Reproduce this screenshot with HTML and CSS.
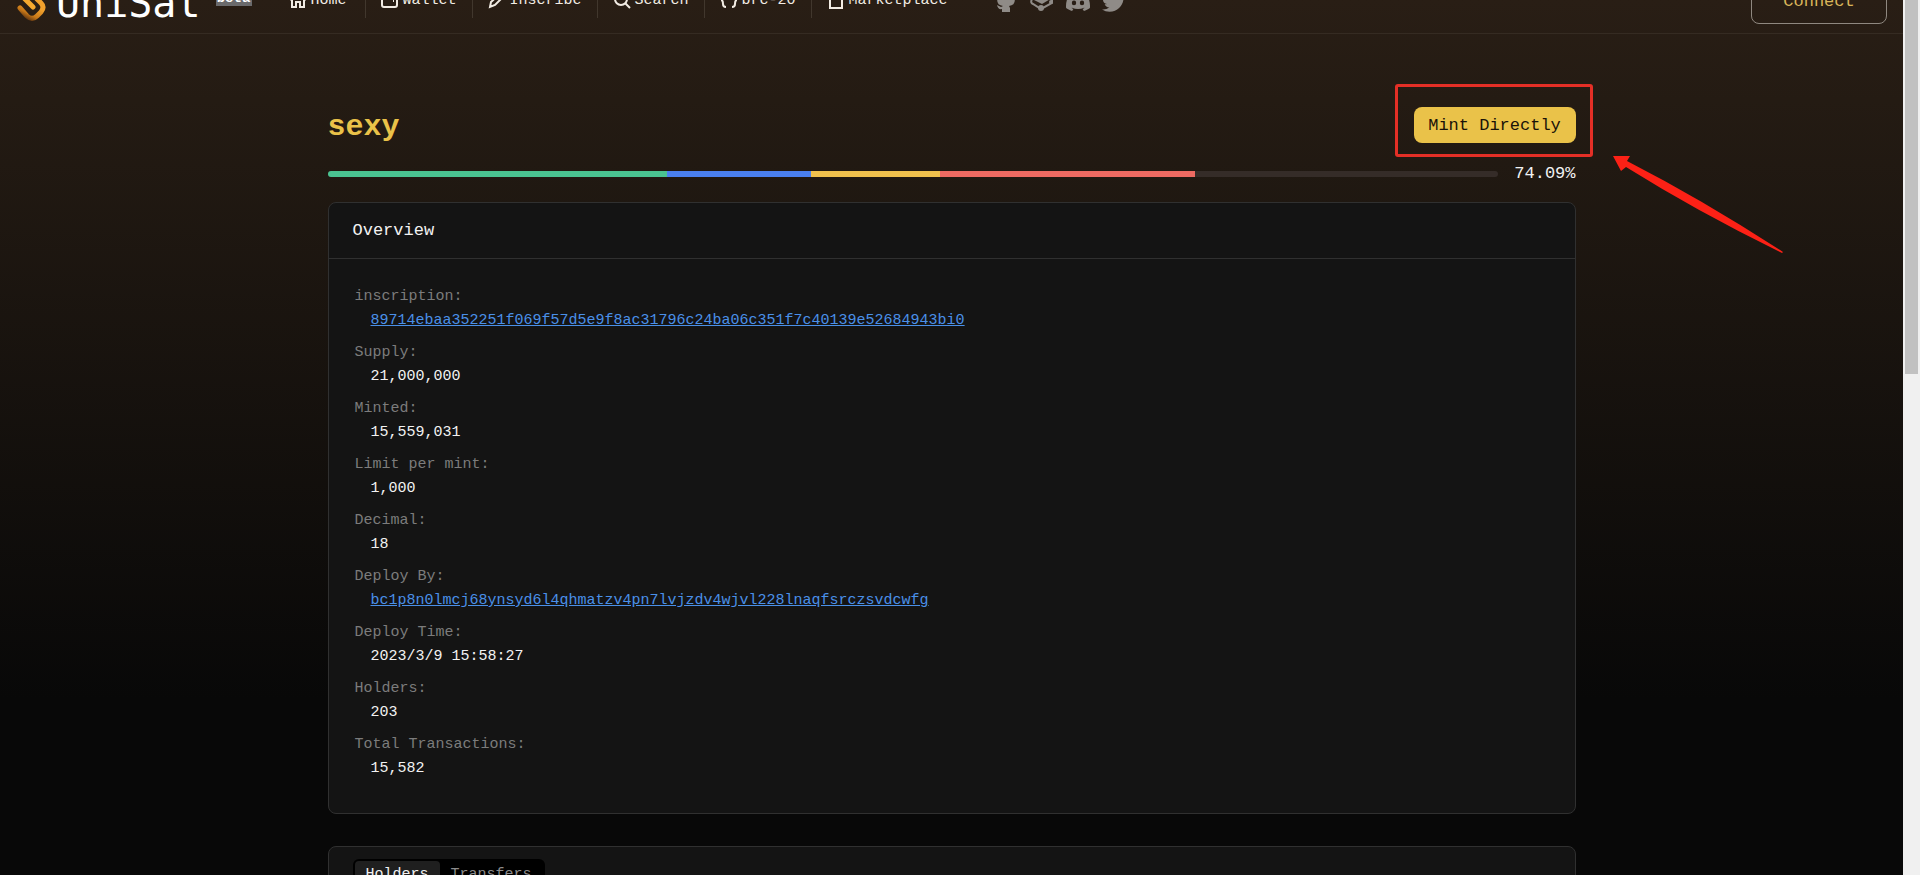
FILE: index.html
```html
<!DOCTYPE html>
<html lang="en">
<head>
<meta charset="utf-8">
<title>UniSat</title>
<link rel="stylesheet" href="styles.css">
</head>
<body>
<div class="window">
<div class="page">
  <header class="header">
    <a class="brand" href="#">
      <svg class="brand-mark" width="40" height="60" viewBox="0 0 40 60" fill="none" stroke-linecap="round" stroke-linejoin="round">
        <defs><linearGradient id="mark" x1="0.6" y1="0" x2="0.2" y2="1"><stop offset="0.5" stop-color="#f0a02c"/><stop offset="0.8" stop-color="#c87818"/><stop offset="1" stop-color="#5b3210"/></linearGradient></defs>
        <path d="M2 22 17 37" stroke="#f5a92f" stroke-width="5"/>
        <path d="M10 18 25 33Q29 37 25 42L21 46Q16 51 11 46L4 38" stroke="url(#mark)" stroke-width="5"/>
      </svg>
      <span class="brand-name">UniSat</span>
      <span class="beta">beta</span>
    </a>
    <nav class="nav">
      <a href="#"><svg width="18" height="18" viewBox="0 0 18 18"><path d="M1 9 9 2l8 7M3 8v8h4v-5h4v5h4V8"/></svg><span>Home</span></a>
      <a href="#"><svg width="18" height="18" viewBox="0 0 18 18"><rect x="1" y="2" width="15" height="14" rx="2"/><path d="M12 10h1"/></svg><span>Wallet</span></a>
      <a href="#"><svg width="18" height="18" viewBox="0 0 18 18"><path d="M2 16l1-5L13 2l3 3-9 9z"/></svg><span>Inscribe</span></a>
      <a href="#"><svg width="18" height="18" viewBox="0 0 18 18"><circle cx="8" cy="8" r="6"/><path d="M12 12l5 5"/></svg><span>Search</span></a>
      <a href="#"><svg width="18" height="18" viewBox="0 0 18 18"><path d="M6 2Q3 2 3 5q0 4-2 4 2 0 2 4 0 3 3 3M12 2q3 0 3 3 0 4 2 4-2 0-2 4 0 3-3 3"/></svg><span>brc-20</span></a>
      <a href="#"><svg width="18" height="18" viewBox="0 0 18 18"><path d="M3 6h12v11H3zM6 8V4q0-3 3-3t3 3v4"/></svg><span>Marketplace</span></a>
    </nav>
    <div class="social">
      <a href="#" aria-label="GitHub"><svg width="24" height="24" viewBox="0 0 24 24"><path d="M5 1l4 2h6l4-2 1 5q3 9-5 10l1 2v4H8v-3q-4 1-5-4l4 2 2-1Q1 15 4 6z"/></svg></a>
      <a href="#" aria-label="GitBook"><svg width="24" height="24" viewBox="0 0 24 24"><path d="M2 9 12 3l10 5-10 6z"/><path d="M2 9q-2 4 1 5l8 5 11-6v-3" fill="none" stroke="#8f8b87" stroke-width="2"/><circle cx="11" cy="18" r="3"/><circle cx="21" cy="12" r="2"/></svg></a>
      <a href="#" aria-label="Discord"><svg width="24" height="24" viewBox="0 0 24 24"><path d="M20.3 4.4a19.8 19.8 0 0 0-4.9-1.5l-.7 1.3a18 18 0 0 0-5.5 0l-.7-1.3a19.7 19.7 0 0 0-4.9 1.5C.5 9-.3 13.6.1 18.1c2 1.5 4 2.4 6 3l1.3-2-1.9-1 .5-.4c3.9 1.8 8.200 1.8 12 0l.5.4-1.9 1 1.300 2c2-.6 4-1.500 6-3 .500-5.200-.8-9.700-3.600-13.700zM8 15.300a2.200 2.400 0 1 1 0-4.800 2.200 2.400 0 0 1 0 4.800zm8 0a2.200 2.400 0 1 1 0-4.800 2.200 2.400 0 0 1 0 4.800z" fill-rule="evenodd"/></svg></a>
      <a href="#" aria-label="Twitter"><svg width="24" height="24" viewBox="0 0 24 24"><path d="M23.953 4.57a10 10 0 01-2.825.775 4.958 4.958 0 002.163-2.723c-.951.555-2.005.959-3.127 1.184a4.920 4.920 0 00-8.384 4.482C7.690 8.095 4.067 6.130 1.640 3.162a4.822 4.822 0 00-.666 2.475c0 1.710.870 3.213 2.188 4.096a4.904 4.904 0 01-2.228-.616v.060a4.923 4.923 0 003.946 4.827 4.996 4.996 0 01-2.212.085 4.936 4.936 0 004.604 3.417 9.867 9.867 0 01-6.102 2.105c-.390 0-.779-.023-1.170-.067a13.995 13.995 0 007.557 2.209c9.053 0 13.998-7.496 13.998-13.985 0-.210 0-.420-.015-.630A9.935 9.935 0 0024 4.590z"/></svg></a>
    </div>
    <button class="connect" type="button">Connect</button>
  </header>

  <main class="main">
    <div class="title-row">
      <h1 class="title">sexy</h1>
      <div class="mint-wrap">
        <button class="mint" type="button">Mint Directly</button>
        <span class="callout"></span>
        <svg class="arrow" width="172" height="102" viewBox="0 0 172 102"><path d="M0 0 17 0 14 5Q90 44 170 96L169 97Q85 56 13 11L8 15z" fill="#fc2116"/></svg>
      </div>
    </div>
    <div class="progress">
      <div class="track">
        <span class="seg green"></span><span class="seg blue"></span><span class="seg yellow"></span><span class="seg red"></span>
      </div>
      <span class="percent">74.09%</span>
    </div>

    <section class="card">
      <h2 class="card-title">Overview</h2>
      <dl class="facts">
        <dt>inscription:</dt><dd><a href="#">89714ebaa352251f069f57d5e9f8ac31796c24ba06c351f7c40139e52684943bi0</a></dd>
        <dt>Supply:</dt><dd>21,000,000</dd>
        <dt>Minted:</dt><dd>15,559,031</dd>
        <dt>Limit per mint:</dt><dd>1,000</dd>
        <dt>Decimal:</dt><dd>18</dd>
        <dt>Deploy By:</dt><dd><a href="#">bc1p8n0lmcj68ynsyd6l4qhmatzv4pn7lvjzdv4wjvl228lnaqfsrczsvdcwfg</a></dd>
        <dt>Deploy Time:</dt><dd>2023/3/9 15:58:27</dd>
        <dt>Holders:</dt><dd>203</dd>
        <dt>Total Transactions:</dt><dd>15,582</dd>
      </dl>
    </section>

    <section class="card lists">
      <div class="tabs">
        <button class="tab active" type="button">Holders</button>
        <button class="tab" type="button">Transfers</button>
      </div>
    </section>
  </main>
</div>
<div class="scrollbar"><div class="thumb"></div></div>
</div>
</body>
</html>
```
FILE: styles.css
```css
* { box-sizing: border-box; }
body {
  margin: 0;
  background: #080808;
  color: #f2f2f2;
  font-family: "Liberation Mono", monospace;
  font-size: 15px;
  line-height: 24px;
}
button { font: inherit; cursor: pointer; }
.window {
  display: grid;
  grid-template-columns: 1fr 17px;
  height: 100vh;
  overflow: hidden;
}
.page {
  min-width: 0;
  overflow: hidden;
  background: linear-gradient(#291e15 0, #241b13 100px, #080808 700px);
}
.scrollbar { background: #f0f0f0; padding: 0 2px; }
.thumb { height: 374px; background: #c1c1c1; }

/* The page is scrolled by half the header's height. */
.header {
  display: flex;
  align-items: center;
  height: 68px;
  margin-top: -34px;
  padding: 0 16px;
  border-bottom: 1px solid #352b22;
}
.brand { display: flex; align-items: center; color: #fff; text-decoration: none; }
.brand-name {
  padding-top: 6px;
  font-family: "DejaVu Sans Mono", monospace;
  font-size: 40px;
  line-height: 48px;
}
.beta {
  width: 36px;
  margin: 0 0 4px 15px;
  background: #6a6a6c;
  font-size: 14px;
  font-weight: 700;
  line-height: 16px;
  text-align: center;
}
.nav { display: flex; margin-left: 22px; }
.nav a {
  display: flex;
  align-items: center;
  gap: 4px;
  height: 36px;
  padding: 0 15px;
  border-right: 1px solid #41372d;
  color: #f2ece4;
  text-decoration: none;
}
.nav a:first-child { padding-right: 18px; }
.nav a:last-child { border-right: 0; }
.nav span { padding-top: 2px; }
.nav svg { fill: none; stroke: #f2ece4; stroke-width: 2; }
.social { display: flex; gap: 12px; margin-left: 31px; padding-top: 4px; }
.social svg { display: block; fill: #8f8b87; }
.connect {
  width: 136px;
  height: 48px;
  margin-left: auto;
  padding: 4px 0 0;
  background: none;
  border: 1px solid #8f8880;
  border-radius: 8px;
  color: #d9b55a;
  font-size: 17px;
}

.main { max-width: 1248px; margin: 0 auto; padding-top: 73px; }
.title-row { display: flex; justify-content: space-between; align-items: center; height: 36px; }
.title { margin: 0; padding-top: 4px; color: #eac249; font-size: 30px; line-height: 36px; }
.mint-wrap { position: relative; }
.mint {
  display: block;
  width: 162px;
  height: 36px;
  padding: 2px 0 0;
  background: #eac249;
  border: 0;
  border-radius: 8px;
  color: #1a1208;
  font-size: 17px;
}
.callout {
  position: absolute;
  inset: -23px -17px -14px -19px;
  border: 3px solid #e42f26;
  border-radius: 3px;
  pointer-events: none;
}
.arrow { position: absolute; left: 199px; top: 49px; pointer-events: none; }
.progress { display: flex; align-items: center; gap: 16px; height: 24px; margin-top: 19px; }
.track { display: flex; flex: 1; height: 6px; border-radius: 3px; background: #352c28; overflow: hidden; }
.green { width: 29%; background: #4ac391; }
.blue { width: 12.3%; background: #4a80f0; }
.yellow { width: 11%; background: #f0c14d; }
.red { width: 21.79%; background: #ee6a62; }
.percent { font-size: 17px; }

.card { margin-top: 16px; background: #141414; border: 1px solid #303030; border-radius: 8px; }
.card-title {
  margin: 0;
  padding: 16px 24px 15px;
  border-bottom: 1px solid #303030;
  font-size: 17px;
  font-weight: 400;
}
.facts { margin: 0; padding: 26px 26px 24px; }
.facts dt { color: #7c7c7c; }
.facts dd { margin: 0 0 8px 16px; }
.facts a { color: #4a90e8; }
.lists { margin-top: 32px; padding: 12px 24px; }
.tabs { display: inline-flex; padding: 2px; background: #000; border-radius: 6px; }
.tab {
  height: 28px;
  padding: 0 11px;
  background: none;
  border: 0;
  border-radius: 4px;
  color: #8c8c8c;
}
.tab.active { background: #1f1f1f; color: #f2f2f2; }
```
